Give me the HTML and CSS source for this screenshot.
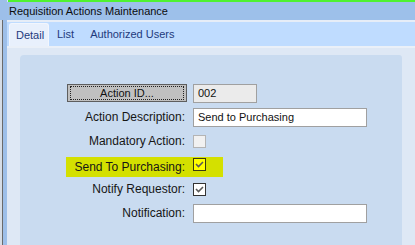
FILE: index.html
```html
<!DOCTYPE html>
<html lang="en">
<head>
    <meta charset="UTF-8" />
    <title>Requisition Actions Maintenance</title>
    <link rel="stylesheet" href="styles.css">
</head>
<body>
    <div class="frame">
        <div class="edge">
            <div class="edge-top"></div>
            <div class="edge-rest"></div>
        </div>
        <div class="main">
            <div class="accent"></div>
            <div class="titlebar">Requisition Actions Maintenance</div>
            <div class="tabs">
                <div class="tab active">Detail</div>
                <div class="tab">List</div>
                <div class="tab">Authorized Users</div>
            </div>
            <div class="content">
                <div class="panel">
                    <div class="row">
                        <div class="label"><button class="btn"><span class="focus">Action ID...</span></button></div>
                        <div class="field readonly">002</div>
                    </div>
                    <div class="row">
                        <div class="label">Action Description:</div>
                        <div class="field wide">Send to Purchasing</div>
                    </div>
                    <div class="row">
                        <div class="label">Mandatory Action:</div>
                        <span class="check disabled"></span>
                    </div>
                    <div class="row bottom">
                        <div class="highlight">
                            <div class="label">Send To Purchasing:</div>
                            <span class="check yellow">
                                <svg width="11" height="11" viewBox="0 0 11 11"><polyline points="2,5 4.5,7.5 9,3" fill="none" stroke="#5a5a5a" stroke-width="1.6"/></svg>
                            </span>
                        </div>
                    </div>
                    <div class="row">
                        <div class="label">Notify Requestor:</div>
                        <span class="check dark">
                            <svg width="11" height="11" viewBox="0 0 11 11"><polyline points="2,5 4.5,7.5 9,3" fill="none" stroke="#5a5a5a" stroke-width="1.6"/></svg>
                        </span>
                    </div>
                    <div class="row">
                        <div class="label">Notification:</div>
                        <div class="field wide"></div>
                    </div>
                </div>
            </div>
        </div>
    </div>
</body>
</html>
```

FILE: styles.css
```css
* {
    margin: 0;
    padding: 0;
    box-sizing: border-box;
}

body {
    width: 415px;
    height: 245px;
    overflow: hidden;
    font-family: "Liberation Sans", Arial, sans-serif;
    background: #dee8f5;
}

.frame {
    display: flex;
    height: 245px;
}

.edge {
    width: 7px;
    display: flex;
    flex-direction: column;
}

.edge-top {
    height: 20px;
    background: #9dbfe9;
}

.edge-rest {
    flex: 1;
    background: linear-gradient(to right, #d6dde6 0 2px, #6a6a6a 2px 3px, #9dbfe9 3px);
}

.main {
    flex: 1;
    display: flex;
    flex-direction: column;
}

.accent {
    height: 2px;
    background: #4ff230;
    margin-left: 1px;
}

.titlebar {
    height: 20px;
    line-height: 18px;
    padding-left: 2px;
    background: #9dc0ea;
    border-bottom: 2px solid #e6edf7;
    font-size: 11px;
    color: #0c0c0c;
}

.tabs {
    height: 26px;
    display: flex;
    align-items: flex-end;
    padding-left: 2px;
    background: #bfdcff;
    border-bottom: 2px solid #eaf0f8;
}

.tab {
    height: 23px;
    line-height: 23px;
    padding: 0 8px;
    font-size: 11px;
    color: #1e3a7c;
}

.tab.active {
    padding: 0 6px 0 6px;
    width: 40px;
    background: #e8f0fc;
    border: 1px solid #f2f6fd;
    border-bottom: none;
    border-radius: 3px 3px 0 0;
}

.content {
    flex: 1;
    padding: 7px 13px 0 13px;
    background: #dee8f5;
    display: flex;
}

.panel {
    flex: 1;
    background: #c9dbf0;
    border-radius: 4px 3px 0 0;
    padding-top: 26px;
}

.row {
    height: 24px;
    display: flex;
    align-items: center;
}

.row.bottom {
    align-items: flex-end;
}

.label {
    width: 165px;
    margin-right: 8px;
    text-align: right;
    font-size: 12px;
    color: #161616;
    display: flex;
    justify-content: flex-end;
}

.btn {
    width: 120px;
    height: 18px;
    margin-right: -2px;
    padding: 1px 2px;
    display: flex;
    background: #c0c0c0;
    border: 1px solid #5e5e5e;
    font-family: "Liberation Sans", Arial, sans-serif;
    font-size: 11px;
    color: #111;
}

.focus {
    flex: 1;
    line-height: 12px;
    text-align: center;
    border: 1px dotted #222;
}

.field {
    height: 19px;
    line-height: 17px;
    padding-left: 4px;
    border: 1px solid #a0a0a0;
    background: #fff;
    font-size: 11px;
    color: #111;
}

.field.readonly {
    width: 64px;
    background: #ebebeb;
}

.field.wide {
    width: 174px;
}

.check {
    width: 13px;
    height: 13px;
    display: flex;
    align-items: center;
    justify-content: center;
    border: 1px solid #333;
    background: #fff;
}

.check.disabled {
    background: #f1f1f1;
    border-color: #b4b4b4;
}

.check.yellow {
    background: #ffff00;
    border-color: #3a3a10;
}

.highlight {
    height: 20px;
    margin-left: 46px;
    padding-right: 17px;
    display: flex;
    align-items: center;
    background: #d4e000;
}

.highlight .label {
    width: 119px;
}

.highlight .check {
    align-self: flex-start;
    margin-top: 1px;
}
```
